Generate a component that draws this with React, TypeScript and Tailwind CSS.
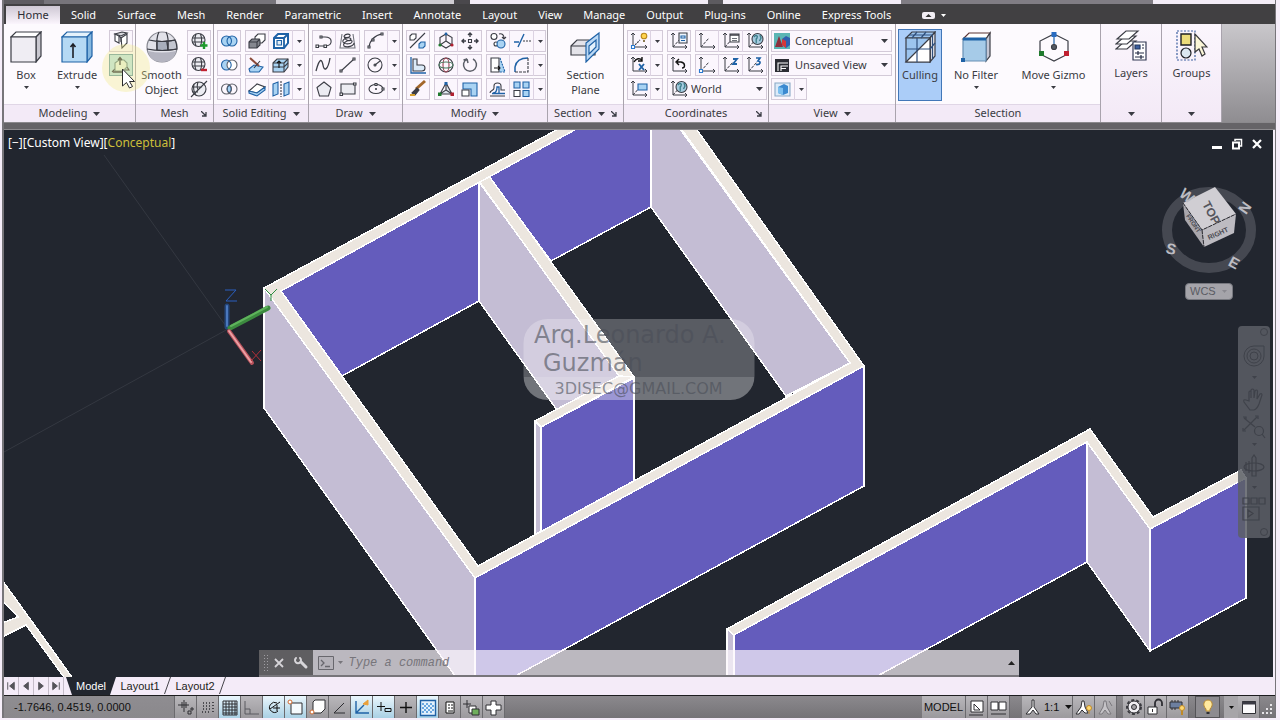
import type { ReactNode } from 'react'
import clsx from 'clsx'

const INK = '#3b3d45'
const BLUE = '#1f62a6'
const SKY = '#a9d3f3'

/* ---------- shared bits ---------- */

function Caret({ className, small }: { className?: string; small?: boolean }) {
  return (
    <svg
      viewBox="0 0 8 4"
      aria-hidden="true"
      className={clsx('shrink-0', small ? 'w-[5px] h-[3px]' : 'w-[7px] h-1', className)}
      preserveAspectRatio="none"
    >
      <path d="M0 0H8L4 4Z" fill="currentColor" />
    </svg>
  )
}

function Icon({ children }: { children: ReactNode }) {
  return (
    <svg
      viewBox="0 0 24 22"
      aria-hidden="true"
      className="w-6 h-[22px] shrink-0"
      fill="none"
      stroke={INK}
      strokeWidth="1.1"
    >
      {children}
    </svg>
  )
}

function BigIcon({ children }: { children: ReactNode }) {
  return (
    <svg viewBox="0 0 32 32" aria-hidden="true" className="size-8" fill="none" stroke={INK} strokeWidth="1.2">
      {children}
    </svg>
  )
}

/* ---------- small ribbon icons ---------- */

const axes = <path d="M6 3V17H20M4 5L6 3L8 5M18 15L20 17L18 19" strokeWidth="1" />
const axesDiag = (
  <>
    {axes}
    <path d="M6 17L14 8" strokeDasharray="3 1" strokeWidth="1" />
  </>
)

const meshBall = (
  <>
    <circle cx="11.5" cy="10" r="6.5" fill="#ececf2" />
    <path d="M5.500 8H17.500M5.500 12H17.500M9 4C7.500 8 7.500 12 9 16M13.500 4C15 8 15 12 13.500 16" />
  </>
)

const icons: Record<string, ReactNode> = {
  Polysolid: (
    <>
      <path d="M6 4V11L10 13V6Z" fill="#fff" />
      <path d="M6 4L12 6L18 3L13 2Z" fill="#d9d9de" />
      <path d="M12 8L18 4V13L13 18Z" fill="#fff" />
      <path d="M10 6L12 8V12" />
    </>
  ),
  Presspull: (
    <>
      <path d="M3 18L6 15M18 13L20 16H16" />
      <path d="M6 9L10 6H15L18 9V13L14 17H6Z" fill="#e6f2e0" stroke="#6d8c8a" />
      <path d="M11 11V3.500M9 6L11 3.500L13 6M4 18H14" strokeWidth="1.3" />
    </>
  ),
  'Smooth more': (
    <>
      {meshBall}
      <path d="M17 12V19M13.500 15.500H20.500" stroke="#1f9a2d" strokeWidth="2.400" />
    </>
  ),
  'Smooth less': (
    <>
      {meshBall}
      <path d="M14 16H20" stroke="#c02030" strokeWidth="2.400" />
    </>
  ),
  'Refine mesh': (
    <>
      <circle cx="12" cy="11" r="7" fill="#ececf2" />
      <path d="M5 9H15M7 6C6 10 7 14 9 17M11 4C10 7 10 10 11 12M6 14H11M4 19L20 3" />
    </>
  ),
  Union: (
    <>
      <circle cx="9.5" cy="11" r="5" fill={SKY} stroke="none" />
      <circle cx="15" cy="11" r="5" fill={SKY} stroke="none" />
      <circle cx="9.5" cy="11" r="5" stroke={BLUE} />
      <circle cx="15" cy="11" r="5" stroke={BLUE} />
    </>
  ),
  Subtract: (
    <>
      <circle cx="9.5" cy="11" r="5" fill={SKY} stroke={BLUE} />
      <circle cx="15" cy="11" r="5" fill="#fff" stroke="#5c5f68" />
      <path d="M12.200 7A5 5 0 0 1 12.200 15" stroke={BLUE} />
    </>
  ),
  Intersect: (
    <>
      <path d="M12.200 7A5 5 0 0 1 12.200 15A5 5 0 0 1 12.200 7Z" fill={SKY} stroke={BLUE} />
      <circle cx="9.5" cy="11" r="5" stroke="#5c5f68" />
      <circle cx="15" cy="11" r="5" stroke="#5c5f68" />
    </>
  ),
  Interfere: (
    <>
      <path d="M10 7L13 4H20V10L17 13H10Z" fill="#fff" />
      <path d="M4 12L7 9H14L15 11V15L12 18H4Z" fill="#85878f" />
      <path d="M4 12H12V18M12 12L15 9" />
    </>
  ),
  Slice: (
    <>
      <path d="M4 15L9 11L18 13L14 18H5Z" fill={SKY} stroke={BLUE} />
      <path d="M5 4L14 12" stroke="#8b4b3a" strokeWidth="2" />
      <path d="M15 7L9 14" stroke={INK} />
    </>
  ),
  Thicken: (
    <>
      <path d="M4 13L12 6L20 9L12 15Z" fill="#fff" />
      <path d="M4 13L12 15L20 9V12L12 18L4 15Z" fill={SKY} stroke={BLUE} />
    </>
  ),
  'Extract edges': (
    <>
      <path d="M5 8L9 4H19V13L15 18H5Z" fill="#fff" stroke={BLUE} strokeWidth="2" />
      <path d="M5 8H15V18M15 8L19 4" stroke={BLUE} strokeWidth="1.800" />
      <path d="M8 10.500H12.500V15H8Z" fill="#e3eef8" stroke={BLUE} />
    </>
  ),
  'Extrude faces': (
    <>
      <path d="M4 9L8 5H19V13L15 18H4Z" fill={SKY} />
      <path d="M4 9H15V18M15 9L19 5M4 13H15L19 9" />
      <path d="M10 14V7M8 9L10 7L12 9" stroke="#111" />
    </>
  ),
  Separate: (
    <>
      <path d="M4 6L9 4V16L4 18ZM15 6L20 4V16L15 18Z" fill={SKY} stroke={BLUE} />
      <path d="M12 3V19" strokeDasharray="2 1" />
    </>
  ),
  Polyline: (
    <>
      <path d="M6 16H14C21 15 21 7 13 7H8" />
      <path d="M4 15H6.500V17.500H4ZM12 15H14.500V17.500H12ZM8 6H10V8H8Z" fill="#fff" />
    </>
  ),
  Helix: (
    <>
      <path d="M6 4L4 18H19L17 4" stroke="#72747c" />
      <path d="M8 6C10 3 15 4 14 6C13 8 8 8 8 6C9 11 15 12 15 9C13 6 6 9 7 12C9 15 17 14 16 11C14 9 6 12 8 16C11 18 18 16 18 13" />
    </>
  ),
  Arc: (
    <>
      <path d="M5 17C6 10 11 5 18 4" />
      <path d="M4 16H6V18H4ZM8 9H10V11H8ZM17 3H19V5H17Z" fill="#fff" />
    </>
  ),
  Spline: <path d="M4 17C8 2 10 6 11 11C12 18 16 16 18 4" strokeWidth="1.300" />,
  Line: (
    <>
      <path d="M5 17L18 5" />
      <path d="M4 16H6V18H4ZM17 4H19V6H17Z" fill="#fff" />
    </>
  ),
  Circle: (
    <>
      <circle cx="11" cy="11" r="7" />
      <path d="M11 11L16 7" />
      <circle cx="11" cy="11" r="1" />
    </>
  ),
  Polygon: <path d="M12 4L19 9.500L16.500 18H7.500L5 9.500Z" fill="#ececf2" />,
  Rectangle: (
    <>
      <path d="M5 6H19V16H5Z" fill="#ececf2" />
      <path d="M4 15H6.500V17.500H4ZM17.500 5H20V7H17.500Z" fill="#fff" />
    </>
  ),
  Ellipse: (
    <>
      <ellipse cx="12" cy="11" rx="7" ry="4.500" />
      <path d="M11 11H13M12 10V12" />
      <path d="M11 5.500H13V7.500H11ZM18 10H20V12H18Z" fill="#fff" />
    </>
  ),
  'Scale blocks': (
    <>
      <path d="M4 18L19 3" />
      <path d="M4 6L6 4H10V8L8 10H4Z" fill="#fff" />
      <path d="M13 14L15 12H19V16L17 18H13Z" fill={SKY} stroke={BLUE} />
    </>
  ),
  Align: (
    <>
      <path d="M5 3V19H20" stroke={BLUE} strokeWidth="1.300" />
      <path d="M7 5H11V11H16A3 3 0 0 1 16 17H7Z" fill="#dbeaf8" />
    </>
  ),
  Erase: (
    <>
      <path d="M10 11L19 3" stroke="#a3672a" strokeWidth="3" />
      <path d="M6 15L11 10L13 12L9 17Z" fill="#3b3d45" />
      <path d="M4 17H9" stroke="#d6a030" strokeWidth="2" />
    </>
  ),
  '3D Move': (
    <>
      <path d="M12 4L18 7.500V14.500L12 18L6 14.500V7.500ZM12 4V11L6 15M12 11L18 15" />
      <circle cx="12" cy="4" r="1.400" fill={BLUE} stroke="none" />
      <circle cx="6" cy="15" r="1.600" fill="#1f7a2d" stroke="none" />
      <circle cx="18" cy="15" r="1.600" fill="#b02030" stroke="none" />
    </>
  ),
  '3D Rotate': (
    <>
      <circle cx="12" cy="11" r="7" />
      <ellipse cx="12" cy="11" rx="3" ry="7" stroke="#9a4050" />
      <ellipse cx="12" cy="11" rx="7" ry="3" stroke="#4a7a60" />
    </>
  ),
  '3D Scale': (
    <>
      <path d="M12 5L6 16H18ZM12 5V12L6 16M12 12L18 16" fill="#dfe6ee" />
      <path d="M10.500 4H13.500V7H10.500Z" fill={BLUE} stroke="none" />
      <path d="M4 14.500H7.500V18H4Z" fill="#1f7a2d" stroke="none" />
      <path d="M16.500 14.500H20V18H16.500Z" fill="#b02030" stroke="none" />
    </>
  ),
  Move: (
    <>
      <path d="M12 3V7M12 15V19M4 11H8M16 11H20M10 5L12 3L14 5M10 17L12 19L14 17M6 9L4 11L6 13M18 9L20 11L18 13" strokeWidth="1.400" />
      <path d="M10.500 9.500H13.500V12.500H10.500Z" />
    </>
  ),
  Rotate: <path d="M9 5A6.500 6.500 0 1 0 15 5M9 5L10 9M9 5L5.500 6" stroke="#5c5f68" strokeWidth="1.500" />,
  Scale: (
    <>
      <path d="M5 5H19V18H13V11H5Z" fill={SKY} stroke={BLUE} />
      <path d="M4 12H11V18H4Z" fill="#fff" />
    </>
  ),
  Copy: (
    <>
      <circle cx="8" cy="6.500" r="3" fill="#fff" />
      <circle cx="10" cy="14" r="2" fill="#fff" />
      <circle cx="15" cy="14" r="4" fill={SKY} stroke={BLUE} />
      <path d="M13 4C16 3 18 5 18 8M16 7L18 9L20 7" />
    </>
  ),
  Trim: (
    <>
      <path d="M4 12H9M8 17L14 4" stroke={BLUE} strokeWidth="1.400" />
      <path d="M13 11H21" strokeDasharray="2 1" />
    </>
  ),
  Stretch: (
    <>
      <path d="M14 4L19 18H13" fill={SKY} stroke={BLUE} strokeDasharray="2 1" />
      <path d="M5 4H13V18H5Z" fill="#fff" />
      <path d="M8 14H14M12 12L14 14L12 16" stroke="#111" />
    </>
  ),
  Fillet: (
    <>
      <path d="M5 18V13C6 7 10 4 18 4" stroke={BLUE} strokeWidth="1.500" />
      <path d="M18 4V18H5" strokeDasharray="3 1" />
    </>
  ),
  Offset: (
    <>
      <path d="M4 18H19M4 15C4 12 8 13 8 10V8C8 4 15 4 15 8V12H19" />
      <path d="M6 15.500H19M7 15C10 15 11 13 11 9H13V15" stroke={BLUE} strokeWidth="1.300" />
    </>
  ),
  Array: (
    <>
      <path d="M4 4H10V10H4ZM13 4H19V10H13ZM13 12.500H19V18.500H13Z" fill={SKY} stroke={BLUE} />
      <path d="M4 12.500H10V18.500H4Z" fill="#fff" />
    </>
  ),
  'UCS icon': (
    <>
      {axes}
      <path d="M6 17L13 10" strokeDasharray="2 1" />
      <path d="M4.500 15.500H7.500V18.500H4.500Z" fill="#fff" stroke="#2a7ad0" />
      <circle cx="17" cy="6" r="2.800" fill="#ffd34d" stroke="#b98718" />
      <path d="M16 10H18V12H16Z" fill="#8a7a50" stroke="none" />
    </>
  ),
  'Named UCS': (
    <>
      {axesDiag}
      <path d="M12 3H20V13H12Z" fill="#eef5fd" />
      <path d="M14 6H18V8H14ZM14 10.500H18" stroke={BLUE} />
    </>
  ),
  UCS: axesDiag,
  'UCS view': (
    <>
      {axesDiag}
      <path d="M11 4H20V12H11Z" fill="#fff" />
      <path d="M11 5H20" strokeWidth="1.500" />
      <path d="M13 8.500H18M13 10.500H18" stroke="#6c7078" />
    </>
  ),
  'UCS world': (
    <>
      {axesDiag}
      <circle cx="14.5" cy="9" r="5.500" fill="#a5cbdf" />
      <path d="M11 7C13 4 15 6 14 8C12 9 14 12 13 13M17 5L18 8L16.500 11" stroke="#3d7f8c" strokeWidth="1.400" />
    </>
  ),
  'UCS rotate X': (
    <>
      {axes}
      <path d="M7 8C9 4 13 4 15 6M15 3V7H11" stroke="#111" strokeWidth="1.400" />
      <path d="M12 10L17 16M17 10L12 16" stroke={BLUE} strokeWidth="1.900" />
    </>
  ),
  'UCS previous': (
    <>
      {axes}
      <path d="M10 8H14C19 9 18 14 15 14M12 5L9 8L12 11" stroke="#111" strokeWidth="1.400" />
    </>
  ),
  'UCS origin': (
    <>
      {axesDiag}
      <path d="M4.500 15.500H7.500V18.500H4.500Z" fill="#fff" stroke="#2a7ad0" />
    </>
  ),
  'UCS Z axis': (
    <>
      {axesDiag}
      <path d="M14 5H18L14 10H18" stroke={BLUE} strokeWidth="1.800" />
    </>
  ),
  'UCS 3 point': (
    <>
      {axesDiag}
      <path d="M13 4H17L15 7C18 7 18 11 13 10.500" stroke={BLUE} strokeWidth="1.700" />
    </>
  ),
  'UCS object': (
    <>
      {axesDiag}
      <path d="M11 6H20V12H11Z" fill={SKY} stroke={BLUE} />
    </>
  ),
  'Visual style': (
    <>
      <path d="M3 3H19V19H3Z" fill="#5bb5b4" stroke="none" />
      <path d="M4 17L8 6L12 17Z" fill="#8d2f3d" stroke="none" />
      <path d="M11 9L15 6L19 8V15L15 18L11 15Z" fill="#2f5fae" stroke="none" />
      <path d="M11 9L15 11V18L11 15Z" fill="#d63838" stroke="none" />
    </>
  ),
  'Saved view': (
    <>
      <path d="M4 5H18V18H4Z" fill="#2b2d33" stroke="none" />
      <path d="M7 17V9H17M10 17V12H17M10 14.500H15" stroke="#fff" />
    </>
  ),
  'View cube': (
    <>
      <path d="M4 5H19V18H4Z" fill="#dcebf9" stroke="#8aa9c6" />
      <path d="M7 9L13 6L17 8V15L12 17L7 15Z" fill="#3b8ad0" stroke="none" />
      <path d="M7 9L12 10V17L7 15Z" fill="#7cc0f0" stroke="none" />
    </>
  ),
}

/* ---------- ribbon building blocks ---------- */

function Tool({ name, active }: { name: string; active?: boolean }) {
  return (
    <button
      type="button"
      aria-label={name}
      className={clsx('flex h-[22px] w-6 items-center justify-center', active && 'bg-[#bfe3e3] ring-1 ring-inset ring-[#6f9fa8]')}
    >
      <Icon>{icons[name]}</Icon>
    </button>
  )
}

function More({ label }: { label: string }) {
  return (
    <button type="button" aria-label={label} className="flex h-[22px] w-3 items-center justify-center">
      <Caret small />
    </button>
  )
}

function Group({ tools, more }: { tools: string[]; more?: boolean }) {
  return (
    <div className="flex w-fit divide-x divide-[#dcd2e2] bg-[#fbf6fd] ring-1 ring-inset ring-[#d3cad8]">
      {tools.map((t) => (
        <Tool key={t} name={t} />
      ))}
      {more && <More label={`More ${tools[tools.length - 1]} options`} />}
    </div>
  )
}

function Stack({ rows, more }: { rows: string[][]; more?: boolean }) {
  return (
    <div className="flex flex-col gap-0.5">
      {rows.map((r) => (
        <Group key={r[0]} tools={r} more={more} />
      ))}
    </div>
  )
}

function BigButton({
  label,
  icon,
  caret,
  className,
}: {
  label: ReactNode
  icon: ReactNode
  caret?: boolean
  className?: string
}) {
  return (
    <button type="button" className={clsx('flex flex-col items-center', className)}>
      <BigIcon>{icon}</BigIcon>
      <span className="mt-1 block whitespace-nowrap leading-[15px]">{label}</span>
      {caret && <Caret small className="mt-1" />}
    </button>
  )
}

function Panel({
  title,
  caret,
  launcher,
  className,
  children,
}: {
  title: string
  caret?: boolean
  launcher?: boolean
  className: string
  children: ReactNode
}) {
  return (
    <section className={clsx('flex shrink-0 flex-col border-r border-[#a9a3ad] bg-[#fdfafe]', className)}>
      <div className="flex flex-1 items-start pt-1.5">{children}</div>
      <div className="relative flex h-[18px] items-center justify-center gap-1.5 border-t border-[#e0d6e6] bg-[#f3eaf7]">
        <h2>{title}</h2>
        {caret && <Caret />}
        {launcher && (
          <button type="button" aria-label={`${title} settings`} className={clsx(!caret && 'absolute right-1.5')}>
            <svg viewBox="0 0 6 6" aria-hidden="true" className="size-1.5" fill="none" stroke={INK}>
              <path d="M0 0L5 5M5 1V5H1" strokeWidth="1.3" />
            </svg>
          </button>
        )}
      </div>
    </section>
  )
}

function Picker({ label, value, icon, className }: { label: string; value: string; icon: string; className?: string }) {
  return (
    <div className={clsx('relative flex h-[22px] items-center bg-[#fbf6fd] ring-1 ring-inset ring-[#d3cad8]', className)}>
      <Icon>{icons[icon]}</Icon>
      <select
        aria-label={label}
        defaultValue={value}
        className="h-full min-w-0 flex-1 appearance-none bg-transparent pr-4 outline-none"
      >
        <option>{value}</option>
      </select>
      <Caret className="pointer-events-none absolute right-1" />
    </div>
  )
}

function CollapsedPanel({ title, icon, className }: { title: string; icon: ReactNode; className: string }) {
  return (
    <section
      className={clsx(
        'flex shrink-0 flex-col border-r border-[#a9a3ad] bg-linear-to-b from-[#fbf6fd] to-[#f3e9f6]',
        className,
      )}
    >
      <button type="button" className="flex flex-1 flex-col items-center pt-[5px]">
        <BigIcon>{icon}</BigIcon>
        <span className="mt-1 leading-[15px]">{title}</span>
        <Caret className="mt-auto mb-1.5" />
      </button>
    </section>
  )
}

/* ---------- large ribbon icons ---------- */

const boxIcon = (
  <>
    <path d="M1 6L6 1H31L26 6Z" fill="#fff" />
    <path d="M26 6L31 1V25L26 31Z" fill="#c9c8d0" />
    <path d="M1 6H26V31H1Z" fill="#efedf3" />
  </>
)

const extrudeIcon = (
  <>
    <path d="M1 6L6 1H31L26 6Z" fill="#e5f2fb" stroke={BLUE} />
    <path d="M26 6L31 1V25L26 31Z" fill="#86b8e0" stroke={BLUE} />
    <path d="M1 6H26V31H1Z" fill="#b5d9f4" stroke={BLUE} />
    <path d="M12 27V13M9.500 16L12 13L14.500 16" stroke="#1d1f25" strokeWidth="1.600" />
  </>
)

const smoothIcon = (
  <>
    <circle cx="16" cy="16" r="15" fill="#e2e2e9" stroke="#85868f" />
    <path d="M2 20Q16 23 30 20Q28 31 16 31Q4 31 2 20Z" fill="#b4b4c0" stroke="none" />
    <path d="M11 10Q16 11 21 10L22 19Q16 20 11 19Z" fill="#a9afbd" />
    <path d="M21 10Q26 10 29 9Q31 13 31 18Q27 19 22 19Z" fill="#c3c6d0" />
    <path d="M3 9Q16 12 29 9M1 18Q16 21 31 18M13 1Q10 6 11 19M20 1Q23 6 22 19" />
  </>
)

const sectionIcon = (
  <>
    <path d="M1 15L7 9H19L25 15V24H1Z" fill="#e4e3e9" />
    <path d="M1 15H19V24" />
    <path d="M16 12L29 2V18L16 31Z" fill="#bcd9f5" stroke={BLUE} />
    <path d="M19 15L26 9V16L19 23Z" fill="#e4f1fb" stroke={BLUE} />
  </>
)

const cullingIcon = (
  <>
    <path d="M2 7L8 1H31L26 7Z" fill="#9cc4ee" />
    <path d="M26 7L31 1V25L26 31Z" fill="#e8e8ee" />
    <path d="M2 7H26V31H2Z" fill="#9cc4ee" />
    <path d="M26 7V31H2Z" fill="#fff" />
    <path d="M8 7L13 1M17 7L22 1M5 4H29M13 7V31M2 18H26M28.500 4V28M26 18L31 12" stroke="#2f4f7c" />
  </>
)

const filterIcon = (
  <>
    <path d="M3 8L9 2H30L26 8Z" fill="#fff" stroke="#5b3434" />
    <path d="M26 8L30 2V25L26 30Z" fill="#c5c8d6" />
    <path d="M3 8H26V30H3Z" fill="#a6cbe8" stroke="#6890b4" />
    <path d="M3 8H26" stroke={BLUE} strokeWidth="3" />
    <path d="M1 27H5V31H1Z" fill={BLUE} stroke="none" />
  </>
)

const gizmoIcon = (
  <>
    <path d="M16 3L30 10V23L16 30L2 23V10Z" />
    <path d="M16 3V16" stroke={BLUE} />
    <circle cx="16" cy="16" r="2.500" fill="#555a63" />
    <path d="M13.500 1H18.500V6H13.500Z" fill="#2a6cc0" stroke="none" />
    <path d="M1 20H6V25H1Z" fill="#1f7a2d" stroke="none" />
    <path d="M26 20H31V25H26Z" fill="#c02030" stroke="none" />
  </>
)

const layersIcon = (
  <>
    <path d="M1 20L10 12H21L12 20Z" fill="#fff" />
    <path d="M1 15L10 7H21L12 15Z" fill="#fff" />
    <path d="M2 10L11 2H23L14 10Z" fill="#fff" />
    <path d="M18 13H31V31H18Z" fill="#fff" stroke="#333a55" />
    <path d="M20 16H25V20H20Z" fill="#3b5fa0" stroke="#22375f" />
    <path d="M27 16H29M27 19H29M20 24H29M20 28H29M23 22V26M26 26V30" stroke="#222b44" />
  </>
)

const groupsIcon = (
  <>
    <path d="M1 2H19V31H1Z" stroke="#3b5fa0" strokeDasharray="2 1.500" />
    <path d="M5 5H15V16H5Z" fill="#ecdc7a" stroke="#1d1f25" strokeWidth="1.400" />
    <circle cx="10" cy="24" r="5" fill="#dbe7f0" stroke="#1d1f25" />
    <path d="M19 5V23L23 20L26 27L29 25L26 18H31Z" fill="#fbf6d8" stroke="#3a3a3c" />
  </>
)

/* ---------- ribbon ---------- */

const tabs = [
  'Home', 'Solid', 'Surface', 'Mesh', 'Render', 'Parametric', 'Insert', 'Annotate',
  'Layout', 'View', 'Manage', 'Output', 'Plug-ins', 'Online', 'Express Tools',
]

function TitleStrip() {
  return (
    <div className="flex h-1 shrink-0 bg-[#f3edf7]">
      <div className="w-10 bg-[#5d5b60]" />
      <div className="w-[232px] bg-[#77757b]" />
      <div className="w-[178px] bg-[#cfccd2]" />
      <div className="w-4 bg-[#4a484c]" />
      <div className="w-[238px]" />
      <div className="w-[15px] bg-[#5d5b60]" />
      <div className="w-[178px]" />
      <div className="w-[252px] bg-[#807d84]" />
    </div>
  )
}

function TabBar() {
  return (
    <nav className="flex h-5 shrink-0 items-end gap-px bg-[#414042] pl-0.5 text-white" aria-label="Ribbon tabs">
      {tabs.map((t, i) => (
        <button
          key={t}
          type="button"
          className={clsx(
            'h-[18px] shrink-0 whitespace-nowrap leading-4',
            i === 0 ? 'w-[54px] bg-linear-to-b from-[#cfc8d4] to-[#fbf5fd] text-[#2d2d33]' : 'px-2.5',
          )}
        >
          {t}
        </button>
      ))}
      <button type="button" aria-label="Minimize ribbon" className="ml-5 flex h-[18px] items-center gap-1.5">
        <svg viewBox="0 0 13 7" aria-hidden="true" className="h-[7px] w-[13px]">
          <rect width="13" height="7" rx="2" fill="#f2eef4" />
          <path d="M3.500 5H9.500L6.500 2Z" fill="#333" />
        </svg>
        <Caret small />
      </button>
    </nav>
  )
}

function Cursor() {
  return (
    <svg
      viewBox="0 0 50 50"
      aria-hidden="true"
      className="pointer-events-none absolute top-5 left-[97px] size-[50px]"
    >
      <circle cx="25" cy="24" r="24" fill="#f3ea7c" fillOpacity=".32" />
      <path d="M21.500 25V42L25.500 38.500L28.500 44L31.500 42.500L28.500 37.500H33.500Z" fill="#fff" stroke="#2b2b2b" />
    </svg>
  )
}

function Ribbon() {
  return (
    <div className="relative flex h-[98px] shrink-0 bg-linear-to-b from-[#c9c7cb] to-[#8f8d91] text-[#3a3b42]">
      <Panel title="Modeling" caret className="w-[132px]">
        <BigButton label="Box" icon={boxIcon} caret className="w-11 pt-px" />
        <BigButton label="Extrude" icon={extrudeIcon} caret className="w-[58px] pt-px" />
        <div className="ml-[3px] flex flex-col gap-0.5">
          <Group tools={['Polysolid']} />
          <Tool name="Presspull" active />
        </div>
      </Panel>
      <Panel title="Mesh" launcher className="w-[78px]">
        <BigButton label={<>Smooth<br />Object</>} icon={smoothIcon} className="w-[51px] pt-px" />
        <Stack rows={[['Smooth more'], ['Smooth less'], ['Refine mesh']]} />
      </Panel>
      <Panel title="Solid Editing" caret className="w-[95px]">
        <div className="flex gap-1 pl-[3px]">
          <Stack rows={[['Union'], ['Subtract'], ['Intersect']]} />
          <Stack
            more
            rows={[
              ['Interfere', 'Extract edges'],
              ['Slice', 'Extrude faces'],
              ['Thicken', 'Separate'],
            ]}
          />
        </div>
      </Panel>
      <Panel title="Draw" caret className="w-[94px]">
        <div className="flex gap-1 pl-[3px]">
          <Stack rows={[['Polyline', 'Helix'], ['Spline', 'Line'], ['Polygon', 'Rectangle']]} />
          <Stack more rows={[['Arc'], ['Circle'], ['Ellipse']]} />
        </div>
      </Panel>
      <Panel title="Modify" caret className="w-[145px]">
        <div className="flex gap-1 pl-[3px]">
          <Stack rows={[['Scale blocks'], ['Align'], ['Erase']]} />
          <Stack rows={[['3D Move', 'Move'], ['3D Rotate', 'Rotate'], ['3D Scale', 'Scale']]} />
          <Stack more rows={[['Copy', 'Trim'], ['Stretch', 'Fillet'], ['Offset', 'Array']]} />
        </div>
      </Panel>
      <Panel title="Section" caret launcher className="w-[76px]">
        <BigButton label={<>Section<br />Plane</>} icon={sectionIcon} className="w-full pt-px" />
      </Panel>
      <Panel title="Coordinates" launcher className="w-[145px]">
        <div className="flex gap-1 pl-[3px]">
          <Stack more rows={[['UCS icon'], ['UCS rotate X'], ['UCS object']]} />
          <div className="flex flex-col gap-0.5">
            <div className="flex gap-1">
              <Stack rows={[['Named UCS'], ['UCS previous']]} />
              <Stack
                rows={[
                  ['UCS', 'UCS view', 'UCS world'],
                  ['UCS origin', 'UCS Z axis', 'UCS 3 point'],
                ]}
              />
            </div>
            <Picker label="Current UCS" value="World" icon="UCS world" />
          </div>
        </div>
      </Panel>
      <Panel title="View" caret className="w-[127px]">
        <div className="flex flex-1 flex-col gap-0.5 pl-0.5 pr-[3px]">
          <Picker label="Visual style" value="Conceptual" icon="Visual style" />
          <Picker label="Saved view" value="Unsaved View" icon="Saved view" />
          <Group tools={['View cube']} more />
        </div>
      </Panel>
      <Panel title="Selection" className="w-[205px]">
        <button
          type="button"
          aria-pressed="true"
          className="ml-0.5 -mt-px flex h-[72px] w-11 flex-col items-center bg-[#abcdf8] pt-0.5 ring-1 ring-inset ring-[#4277b8]"
        >
          <BigIcon>{cullingIcon}</BigIcon>
          <span className="mt-1 leading-[15px]">Culling</span>
        </button>
        <BigButton label="No Filter" icon={filterIcon} caret className="w-[68px] pt-px" />
        <BigButton label="Move Gizmo" icon={gizmoIcon} caret className="w-[87px] pt-px" />
      </Panel>
      <CollapsedPanel title="Layers" icon={layersIcon} className="w-[61px]" />
      <CollapsedPanel title="Groups" icon={groupsIcon} className="w-[60px]" />
      <Cursor />
    </div>
  )
}

/* ---------- drawing area ---------- */

const PURPLE = '#645cbc'
const LILAC = '#c4bdd4'
const CREAM = '#ece6df'

function Model3D() {
  return (
    <svg
      viewBox="4 130 1269 547"
      preserveAspectRatio="xMidYMid slice"
      role="img"
      aria-label="3D model of walls"
      className="absolute inset-0 size-full"
    >
      <rect x="4" y="130" width="1269" height="547" fill="#22262f" />
      <path d="M4 452L228 329L104 155" fill="none" stroke="#343841" />

      <g stroke="#fff" strokeWidth="1.500" strokeLinejoin="round" shapeRendering="crispEdges">
        {/* back walls, seen from inside */}
        <path d="M281 291L479 182V301L342 376Z" fill={PURPLE} />
        <path d="M489 177L577 128H651V207L551 261Z" fill={PURPLE} />
        <path d="M651 125V207L786 396L850 363L677 125Z" fill={LILAC} />
        <path d="M479 182V301L557 410L621 376Z" fill={LILAC} />

        {/* outer faces */}
        <path d="M535 421L541 427V531L535 535Z" fill={LILAC} />
        <path d="M541 427L634 378V481L541 532Z" fill={PURPLE} />
        <path d="M264 288V408L458 680H475V578Z" fill={LILAC} />
        <path d="M475 578L864 366V486L508 680H475Z" fill={PURPLE} />

        {/* wall tops */}
        <g fill={CREAM}>
          <path d="M535 421L619 376L634 377L541 427Z" />
          <path d="M479 181L489 176L634 377L619 376Z" />
          <path d="M264 288L562 127H580L281 291L478 566L850 363L680 127H695L864 366L475 578Z" />
        </g>

        {/* second group of walls */}
        <path d="M727 629L734 635V680H727Z" fill={LILAC} />
        <path d="M734 635L1087 442V562L870 680H734Z" fill={PURPLE} />
        <path d="M1087 442L1150 529V651L1087 562Z" fill={LILAC} />
        <path d="M1150 529L1246 478V598L1150 651Z" fill={PURPLE} />
        <path d="M727 629L1090 429L1153 517L1241 470L1246 478L1150 529L1087 442L734 635Z" fill={CREAM} />

        <path d="M2 580L74 680H66L26 625L2 637V623L18 617L2 600Z" fill={CREAM} />
      </g>

      {/* UCS tripod */}
      <g strokeLinecap="round" fill="none">
        <path d="M227 327V306" stroke="#24467c" strokeWidth="5" />
        <path d="M227 326V306" stroke="#4b78bd" strokeWidth="2" />
        <path d="M230 328L268 308" stroke="#3c8a3f" strokeWidth="5" />
        <path d="M231 326L267 307" stroke="#5fb35c" strokeWidth="2" />
        <path d="M229 331L252 363" stroke="#b8525c" strokeWidth="4" />
        <path d="M229 331L251 362" stroke="#eda0a4" strokeWidth="2" />
      </g>
      <path d="M225 290H236L226 301H237" fill="none" stroke="#2a5fc0" />
      <path d="M265 289L271 295L277 289M271 295V301" fill="none" stroke="#2c8c40" />
      <path d="M252 351L261 361M261 350L251 361" fill="none" stroke="#b03038" />
    </svg>
  )
}

function ViewCube() {
  return (
    <svg
      viewBox="0 0 100 104"
      role="img"
      aria-label="View cube"
      className="absolute top-[42px] right-[14px] h-[104px] w-[100px]"
      fontFamily="Liberation Sans, sans-serif"
      fontWeight="bold"
    >
      <ellipse cx="50" cy="58" rx="42" ry="38" fill="none" stroke="#454851" strokeWidth="10" />
      <path d="M24 31L56 15L77 42L43 58Z" fill="#d0ced3" />
      <path d="M43 58L77 42L75 61L45 75Z" fill="#bdbbc1" />
      <path d="M24 31L43 58L45 75L26 48Z" fill="#a9a7ad" />
      <path d="M24 31L43 58L77 42M43 58L45 75" fill="none" stroke="#2b2b31" strokeDasharray="4 1" />
      <text fontSize="12" fill="#55555d" transform="translate(43 32) rotate(62)">TOP</text>
      <text fontSize="7" fill="#4b4b53" transform="translate(50 68) rotate(-24)">RIGHT</text>
      <text fontSize="6" fill="#4b4b53" transform="translate(27 44) rotate(56)">FRONT</text>
      <g fill="#bdbcc2" fontSize="15" textAnchor="middle">
        <text transform="translate(28 24) rotate(40) translate(0 5)">W</text>
        <text transform="translate(86 36) rotate(-55) translate(0 5)">N</text>
        <text transform="translate(12 77) rotate(14) translate(0 5)">S</text>
        <text transform="translate(75 91) rotate(28) translate(0 5)">E</text>
      </g>
    </svg>
  )
}

function NavBar() {
  return (
    <div className="absolute top-[196px] right-[3px] flex h-[212px] w-8 flex-col items-center gap-2 rounded-sm bg-[#5c5f66]/85 pt-[18px] text-[#3f424a]">
      <span className="absolute top-0.5 right-0.5 size-2 rounded-full border border-current" />
      <button type="button" aria-label="Steering wheel">
        <svg viewBox="0 0 24 24" className="size-6" fill="none" stroke="currentColor">
          <path d="M12 2H22V12A10 10 0 1 1 12 2Z" />
          <circle cx="12" cy="12" r="7" />
          <circle cx="12" cy="12" r="4" />
        </svg>
      </button>
      <Caret small />
      <button type="button" aria-label="Pan">
        <svg viewBox="0 0 24 24" className="size-6" fill="none" stroke="currentColor" strokeWidth="1.200">
          <path d="M7 14V5Q8 3 9 5V11V3Q10.500 1 12 3V11L13 4Q14.500 2 15.500 4L15 12L18 7Q20 6 20 8L17 17Q15 22 12 23H8L2 15Q1 12 4 13Z" />
        </svg>
      </button>
      <button type="button" aria-label="Zoom" className="-mt-1">
        <svg viewBox="0 0 24 24" className="size-6" fill="none" stroke="currentColor" strokeWidth="1.200">
          <path d="M2 3L13 12M15 2L2 15M1 2H4V5M13 1H16V4M1 13V16H4M20 19L23 23" />
          <circle cx="17" cy="16" r="4.500" />
        </svg>
      </button>
      <Caret small className="-mt-1" />
      <button type="button" aria-label="Orbit">
        <svg viewBox="0 0 24 24" className="size-6" fill="none" stroke="currentColor" strokeWidth="1.200">
          <ellipse cx="12" cy="13" rx="10" ry="4" />
          <path d="M10 22V4L12 1L14 4V22ZM4 8V17M7 7V19" />
        </svg>
      </button>
      <Caret small />
      <button type="button" aria-label="Show motion">
        <svg viewBox="0 0 24 24" className="size-6" fill="none" stroke="currentColor" strokeWidth="1.200">
          <path d="M1 1H7V7H1ZM9 1H15V7H9ZM17 1H23V7H17ZM1 10H17V23H1ZM6 13V20L11 16.500Z" />
        </svg>
      </button>
      <span className="absolute right-0.5 bottom-0.5 size-2 rounded-full border border-current" />
    </div>
  )
}

function Watermark() {
  return (
    <div className="absolute top-[189px] left-1/2 w-[231px] -translate-x-1/2 overflow-hidden rounded-3xl bg-white/25 font-['DejaVu_Sans','sans-serif'] text-[#4a4e58]/60">
      <p className="pt-0.5 pl-[11px] text-2xl leading-[28px] whitespace-nowrap">Arq.Leonardo A.</p>
      <p className="pl-5 text-2xl leading-[28px]">Guzmán</p>
      <p className="bg-white/15 text-center text-base leading-[23px]">3DISEC@GMAIL.COM</p>
    </div>
  )
}

function CommandLine() {
  return (
    <div className="absolute bottom-0 left-1/2 flex h-[27px] w-[760px] max-w-full -translate-x-1/2 border-b-2 border-[#77757a] bg-[#fcf7fc]/70">
      <div className="flex w-[54px] items-center bg-[#5f5e61] text-[#d6d4d8]">
        <span className="mx-1 h-[17px] w-1.5 bg-[radial-gradient(#a09ea3_1px,transparent_1px)] bg-size-[3px_3px]" />
        <button type="button" aria-label="Close command line">
          <svg viewBox="0 0 12 12" className="size-3" stroke="currentColor" strokeWidth="1.800" fill="none">
            <path d="M2 2L10 10M10 2L2 10" />
          </svg>
        </button>
        <button type="button" aria-label="Customize" className="ml-2">
          <svg viewBox="0 0 16 16" className="size-4" fill="none" stroke="currentColor" strokeLinecap="round">
            <path d="M8 7L13 12" strokeWidth="3" />
            <path d="M3 3A3 3 0 1 0 7 3" strokeWidth="2" />
          </svg>
        </button>
      </div>
      <button type="button" aria-label="Recent commands" className="flex items-center gap-1 pl-[5px] text-[#77757b]">
        <svg viewBox="0 0 16 14" className="h-3.5 w-4" fill="none" stroke="#68676d">
          <path d="M.5 .5H15.500V13.500H.5Z" fill="#b4b1b8" />
          <path d="M3 4L6 7L3 10M7 10.500H12" strokeWidth="1.300" />
        </svg>
        <Caret small />
      </button>
      <input
        type="text"
        aria-label="Command"
        placeholder="Type a command"
        className="ml-1.5 min-w-0 flex-1 bg-transparent font-['Liberation_Mono','monospace'] text-xs italic outline-none placeholder:text-[#77757b]"
      />
      <button type="button" aria-label="Command history" className="mr-1">
        <Caret className="rotate-180 text-[#222]" />
      </button>
    </div>
  )
}

function DrawingArea() {
  return (
    <main className="relative mr-0.5 min-h-0 flex-1 overflow-hidden">
      <Model3D />
      <p className="absolute top-1 left-1 text-xs leading-[18px] text-white">
        [−][Custom View][<span className="text-[#cdbf3a]">Conceptual</span>]
      </p>
      <div className="absolute top-2 right-2.5 flex gap-2 text-white">
        <button type="button" aria-label="Minimize">
          <svg viewBox="0 0 12 12" className="size-3"><path d="M1 8H11V11H1Z" fill="currentColor" /></svg>
        </button>
        <button type="button" aria-label="Restore">
          <svg viewBox="0 0 12 12" className="size-3" fill="none" stroke="currentColor">
            <path d="M4 3V1.500H10.500V8H9" strokeWidth="1.500" />
            <path d="M2 4.500H8V10.500H2Z" strokeWidth="2" />
          </svg>
        </button>
        <button type="button" aria-label="Close">
          <svg viewBox="0 0 12 12" className="size-3" stroke="currentColor" strokeWidth="2.200">
            <path d="M2 2L10 10M10 2L2 10" />
          </svg>
        </button>
      </div>
      <ViewCube />
      <button
        type="button"
        className="absolute top-[153px] right-10 flex h-[17px] w-12 items-center gap-1.5 rounded-sm border border-[#77787f] bg-[#a5a4aa] pl-1 font-['Liberation_Sans','sans-serif'] text-[#5a5b62]"
      >
        WCS <Caret small className="text-[#8a8990]" />
      </button>
      <NavBar />
      <Watermark />
      <CommandLine />
    </main>
  )
}

/* ---------- layout tabs and status bar ---------- */

const steps: [string, string][] = [
  ['First layout', 'M4 2V10M11 2L6 6L11 10Z'],
  ['Previous layout', 'M10 2L5 6L10 10Z'],
  ['Next layout', 'M5 2L10 6L5 10Z'],
  ['Last layout', 'M11 2V10M4 2L9 6L4 10Z'],
]

function LayoutTabs() {
  return (
    <div className="flex h-[19px] shrink-0 items-stretch border-b border-[#1d1d1f] bg-[#f4ebf8] font-['Liberation_Sans','sans-serif'] text-[#1d1d20]">
      {steps.map(([name, d]) => (
        <button key={name} type="button" aria-label={name} className="flex w-[15px] items-center border-r border-[#c5bcc9]">
          <svg viewBox="0 0 15 12" className="h-3 w-[15px]" fill="#55545a" stroke="#55545a">
            <path d={d} />
          </svg>
        </button>
      ))}
      <button type="button" className="ml-0.5 w-[50px] bg-[#22262f] text-white [clip-path:polygon(0_0,100%_0,calc(100%-6px)_100%,6px_100%)]">
        Model
      </button>
      {['Layout1', 'Layout2'].map((t) => (
        <button key={t} type="button" className="flex items-center">
          <span className="w-12 text-center">{t}</span>
          <svg viewBox="0 0 7 18" className="h-[18px] w-[7px]" stroke="#44434a" fill="none">
            <path d="M6.500 0L.5 17" />
          </svg>
        </button>
      ))}
    </div>
  )
}

const toggles: { name: string; on?: boolean; art: ReactNode }[] = [
  { name: 'Infer constraints', art: <path d="M9 3V15M3 8H14M7 5V11M11 5V11M13 14H16V17H13ZM16 11H18V13H16Z" /> },
  {
    name: 'Snap',
    art: <path d="M6 6H14M6 9H14M6 12H14M5 15H14M16 5V16" strokeDasharray="1 2" strokeWidth="1.600" />,
  },
  { name: 'Grid', on: true, art: <path d="M4 4H18V18H4ZM7 4V18M10 4V18M13 4V18M16 4V18M4 7H18M4 10H18M4 13H18M4 16H18" /> },
  { name: 'Ortho', art: <path d="M4 4V17H18M4 12H9V17" stroke="#5a5a60" /> },
  { name: 'Polar', on: true, art: <path d="M14 6A5 5 0 1 0 15 14M7 12L17 5M10 11H17M14 8V14" stroke="#111" /> },
  {
    name: 'Object snap',
    on: true,
    art: (
      <>
        <path d="M6 6H17V17H6Z" fill="#f5fafd" />
        <circle cx="5" cy="5" r="2" fill="#fff" stroke="#d06a30" />
      </>
    ),
  },
  {
    name: '3D object snap',
    art: (
      <>
        <path d="M6 5L8 3H18V12L14 16H6Z" fill="#fff" />
        <circle cx="5" cy="15" r="2" fill="#fff" stroke="#d06a30" />
      </>
    ),
  },
  { name: 'Object snap tracking', art: <path d="M5 16H16M5 16L15 6" /> },
  {
    name: 'Dynamic UCS',
    on: true,
    art: (
      <>
        <path d="M5 4V16H18M5 16L13 8" stroke={BLUE} strokeWidth="1.400" />
        <path d="M12 7L17 3V8Z" fill="#e9a03a" stroke="#e9a03a" />
      </>
    ),
  },
  { name: 'Dynamic input', on: true, art: <path d="M8 5V14M4 9.500H12M12 11.500H18V14.500H12Z" stroke="#111" /> },
  { name: 'Lineweight', art: <path d="M11 5V16M5 10.500H17" stroke="#111" strokeWidth="1.400" /> },
  {
    name: 'Transparency',
    on: true,
    art: (
      <>
        <path d="M3.500 3.500H18.500V18.500H3.500Z" fill="#e3f1fc" stroke={BLUE} strokeWidth="1.400" />
        <path d="M5 7H17M5 11H17M5 15H17" stroke="#6ba8e0" strokeWidth="2" strokeDasharray="2 2" />
        <path d="M7 9H17M7 13H17" stroke="#6ba8e0" strokeWidth="2" strokeDasharray="2 2" />
      </>
    ),
  },
  { name: 'Quick properties', art: <path d="M7 5H15V16H7ZM9 8H11M12 8H14M9 11H11M12 11H14M9 14H14" stroke="#111" fill="#fff" /> },
  {
    name: 'Selection cycling',
    art: (
      <>
        <path d="M6 3V11M2 7H10" />
        <path d="M8 9H15V16H8Z" fill="#fff" />
        <path d="M11 12H18V18H11Z" fill="#6fae5c" />
      </>
    ),
  },
  { name: 'Annotation monitor', art: <path d="M8 4H13V8H18V13H13V18H8V13H3V8H8Z" fill="#fff" /> },
]

function StatusIcon({ children }: { children: ReactNode }) {
  return (
    <svg viewBox="0 0 22 21" aria-hidden="true" className="h-[21px] w-[22px] shrink-0" fill="none" stroke="#2e2e33">
      {children}
    </svg>
  )
}

function StatusButton({ name, children }: { name: string; children: ReactNode }) {
  return (
    <button type="button" aria-label={name} className="flex w-[22px] items-center justify-center border-r border-[#6b6a6e] bg-linear-to-b from-[#b9b7bb] to-[#9b999d]">
      <StatusIcon>{children}</StatusIcon>
    </button>
  )
}

function StatusBar() {
  const plain = 'border-r border-[#6b6a6e] bg-linear-to-b from-[#b9b7bb] to-[#9b999d]'
  return (
    <footer className="flex h-[22px] shrink-0 bg-linear-to-b from-[#8b898d] to-[#757377] font-['Liberation_Sans','sans-serif'] text-[#111]">
      <output className="flex w-[171px] items-center border-r border-[#6b6a6e] bg-linear-to-b from-[#8f8d91] to-[#8a888c] pl-2.5">
        -1.7646, 0.4519, 0.0000
      </output>
      {toggles.map((t) => (
        <button
          key={t.name}
          type="button"
          aria-label={t.name}
          aria-pressed={!!t.on}
          className={clsx(
            'flex w-[22px] items-center justify-center border-r border-[#6b6a6e]',
            t.on ? 'bg-linear-to-b from-[#eaf6fc] to-[#a9d0e4]' : 'bg-linear-to-b from-[#b9b7bb] to-[#9b999d]',
          )}
        >
          <StatusIcon>{t.art}</StatusIcon>
        </button>
      ))}

      <div className="ml-auto flex">
        <button type="button" className={clsx('w-11', plain)}>MODEL</button>
        <StatusButton name="Quick view layouts">
          <path d="M5 4H17V15H5ZM3 18H17" fill="#fff" />
          <path d="M8 7V13H14Z" />
        </StatusButton>
        <StatusButton name="Quick view drawings">
          <path d="M3 5H10V13H3ZM11 5H18V13H11Z" fill="#fff" />
          <path d="M3 17H18" />
        </StatusButton>
        <button type="button" aria-label="Annotation scale" className={clsx('ml-3 flex w-[51px] items-center', plain)}>
          <StatusIcon>
            <path d="M10 3L12 3L12 10L17 17H14L11 13L8 17H4L10 10Z" fill="#fff" />
          </StatusIcon>
          <span>1:1</span>
          <Caret className="ml-1.5" />
        </button>
        <StatusButton name="Annotation visibility">
          <path d="M9 4H11L12 10L15 16H12L9 13L6 17H3L8 10Z" fill="#fff" />
          <circle cx="16" cy="11" r="2.500" fill="#ffd870" stroke="#c08a28" />
          <path d="M16 14V17" stroke="#c08a28" />
        </StatusButton>
        <StatusButton name="Auto scale">
          <path d="M9 4H11L12 10L16 17H13L10 13L7 17H4L8 10ZM14 4L17 9" fill="#c5c3c7" stroke="#7a787d" />
        </StatusButton>
        <div className="w-1.5" />
        <StatusButton name="Workspace switching">
          <circle cx="11" cy="10" r="7" stroke="#3b3b40" strokeWidth="2" strokeDasharray="3 2" />
          <circle cx="11" cy="10" r="6" fill="#f0eef2" />
          <circle cx="11" cy="10" r="2.500" fill="#a3a1a5" />
        </StatusButton>
        <StatusButton name="Lock UI">
          <path d="M3 10H12V17H3ZM7.500 12V15" fill="#fff" />
          <path d="M10 10V6A3.500 3.500 0 0 1 17 6V9" strokeWidth="1.800" />
        </StatusButton>
        <StatusButton name="Hardware acceleration">
          <path d="M3 5H15V11H3ZM5 3V5M8 3V5M11 3V5M5 11V13M8 11V13" fill="#6d7f9f" />
          <circle cx="15" cy="11" r="2.500" fill="#ffd870" stroke="#c08a28" />
          <path d="M15 14V18" stroke="#c08a28" strokeWidth="2" />
        </StatusButton>
        <button type="button" aria-label="Isolate objects" className="ml-1.5 flex w-[25px] items-center justify-center border border-[#555458] bg-[#8d8b90]">
          <StatusIcon>
            <path d="M9 12C5 8 7 3 11 3S17 8 13 12V14H9Z" fill="#ffe9a0" stroke="#b98a30" />
            <path d="M9.500 16H12.500" strokeWidth="2" />
          </StatusIcon>
        </button>
        <button type="button" aria-label="Status bar menu" className="ml-1 flex w-3.5 items-center justify-center bg-[#a7a5a9]">
          <Caret small />
        </button>
        <StatusButton name="Clean screen">
          <path d="M4.500 4.500H17.500V16.500H4.500Z" fill="#fbfafc" />
          <path d="M4 6H18" strokeWidth="3" stroke="#3a3a44" />
        </StatusButton>
        <svg viewBox="0 0 15 22" aria-hidden="true" className="h-[22px] w-[15px]" fill="#e6e4e8">
          <path d="M10 8H12V10H10ZM6 12H8V14H6ZM10 12H12V14H10ZM2 16H4V18H2ZM6 16H8V18H6ZM10 16H12V18H10Z" />
        </svg>
      </div>
    </footer>
  )
}

export default function App() {
  return (
    <div className="h-screen overflow-hidden bg-[#f6eefa] pr-1 pb-0.5 pl-0.5 font-['Noto_Sans','sans-serif'] text-[11px]">
      <div className="flex h-full flex-col border-r border-l-2 border-[#77757a]">
        <TitleStrip />
        <TabBar />
        <Ribbon />
        <div className="h-2 shrink-0 border-y border-[#8b898d] bg-[#656367]" />
        <DrawingArea />
        <LayoutTabs />
        <StatusBar />
      </div>
    </div>
  )
}
